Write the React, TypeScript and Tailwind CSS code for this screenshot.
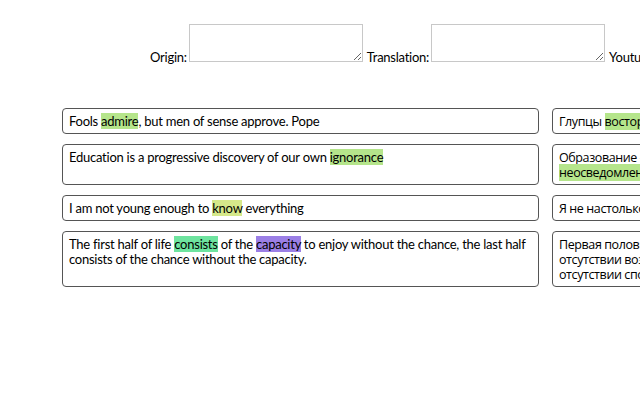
import React from "react";

const font = { fontFamily: 'Lato, "Open Sans", "Noto Sans", sans-serif' };
const ru = { fontFamily: '"Open Sans", "Noto Sans", sans-serif' };

function Card({ children, cyr }: { children: React.ReactNode; cyr?: boolean }) {
  return (
    <div
      className={
        cyr
          ? "rounded-[4px] border border-[#555] bg-white px-[6px] pt-[5px] pb-[4px] text-[12.5px] tracking-[-0.4px] leading-[15px] text-black"
          : "rounded-[4px] border border-[#555] bg-white px-[6px] pt-[5px] pb-[4px] text-[13px] tracking-[-0.25px] leading-[15px] text-black"
      }
      style={cyr ? ru : undefined}
    >
      {children}
    </div>
  );
}

function Row({ left, right }: { left: React.ReactNode; right: React.ReactNode }) {
  return (
    <div className="grid grid-cols-[477px_477px] gap-x-[13px]">
      <Card>{left}</Card>
      <Card cyr>{right}</Card>
    </div>
  );
}

const G = ({ children }: { children: React.ReactNode }) => <span className="bg-[#b5e58b]">{children}</span>;

export default function App() {
  return (
    <div className="w-[640px] h-[400px] overflow-hidden bg-white text-black" style={font}>
      <div className="flex items-end pl-[150px] pt-[24px] text-[13px] tracking-[-0.25px] leading-[15px] whitespace-nowrap w-[1000px]">
        <span className="mb-[-3px]">Origin:</span>
        <textarea className="ml-[2px] h-[38px] w-[174px] shrink-0 border border-[#c8c8c8] bg-white" />
        <span className="ml-[4px] mb-[-3px]">Translation:</span>
        <textarea className="ml-[2px] h-[38px] w-[174px] shrink-0 border border-[#c8c8c8] bg-white" />
        <span className="ml-[4px] mb-[-3px]">Youtube:</span>
      </div>
      <div className="flex flex-col gap-[10px] pl-[62px] pt-[46px] w-[1100px]">
        <Row
          left={<>Fools <G>admire</G>, but men of sense approve. Pope</>}
          right={<>Глупцы <G>восторгаются</G>, а люди со вкусом одобряют. Поуп</>}
        />
        <Row
          left={<>Education is a progressive discovery of our own <G>ignorance</G></>}
          right={<>Образование - это постепенное открытие нашего собственного<br /><G>неосведомленности</G></>}
        />
        <Row
          left={<>I am not young enough to <span className="bg-[#d5e88a]">know</span> everything</>}
          right={<>Я не настолько молод, чтобы <G>знать</G> всё</>}
        />
        <Row
          left={
            <>
              <span className="whitespace-nowrap">
                The first half of life <span className="bg-[#6ee49f]">consists</span> of the{" "}
                <span className="bg-[#9b7fe6]">capacity</span> to enjoy without the chance, the last half
              </span>
              <br />
              consists of the chance without the capacity.
            </>
          }
          right={
            <>
              Первая половина жизни состоит из способности наслаждаться при<br />
              отсутствии возможности, последняя половина — из возможности при<br />
              отсутствии способности.
            </>
          }
        />
      </div>
    </div>
  );
}
